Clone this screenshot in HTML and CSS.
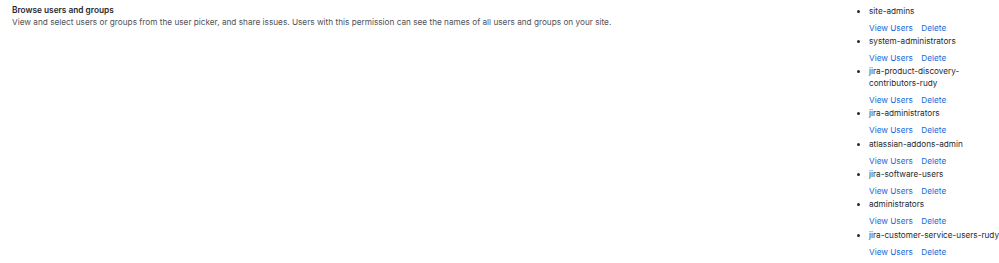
FILE: index.html
```html
<!DOCTYPE html>
<html>
<head>
    <title>Permissions</title>
    <link rel="stylesheet" href="styles.css">
</head>
<body>
    <div class="perm-row">
        <div class="perm-info">
            <div class="perm-title">Browse users and groups</div>
            <div class="perm-desc">View and select users or groups from the user picker, and share issues. Users with this permission can see the names of all users and groups on your site.</div>
        </div>
        <div class="perm-grants">
            <ul class="grant-list">
                <li>
                    <div class="grant-name">site-admins</div>
                    <div class="grant-actions"><a href="#">View Users</a><a href="#">Delete</a></div>
                </li>
                <li>
                    <div class="grant-name">system-administrators</div>
                    <div class="grant-actions"><a href="#">View Users</a><a href="#">Delete</a></div>
                </li>
                <li>
                    <div class="grant-name">jira-product-discovery-contributors-rudy</div>
                    <div class="grant-actions"><a href="#">View Users</a><a href="#">Delete</a></div>
                </li>
                <li>
                    <div class="grant-name">jira-administrators</div>
                    <div class="grant-actions"><a href="#">View Users</a><a href="#">Delete</a></div>
                </li>
                <li>
                    <div class="grant-name">atlassian-addons-admin</div>
                    <div class="grant-actions"><a href="#">View Users</a><a href="#">Delete</a></div>
                </li>
                <li>
                    <div class="grant-name">jira-software-users</div>
                    <div class="grant-actions"><a href="#">View Users</a><a href="#">Delete</a></div>
                </li>
                <li>
                    <div class="grant-name">administrators</div>
                    <div class="grant-actions"><a href="#">View Users</a><a href="#">Delete</a></div>
                </li>
                <li>
                    <div class="grant-name">jira-customer-service-users-rudy</div>
                    <div class="grant-actions"><a href="#">View Users</a><a href="#">Delete</a></div>
                </li>
            </ul>
        </div>
    </div>
</body>
</html>
```

FILE: styles.css
```css
body {
    margin: 0;
    font-family: "Inter", sans-serif;
    font-size: 8.2px;
    color: #292a2e;
    background: #fff;
    overflow: hidden;
}
.perm-row {
    display: flex;
    padding: 4.5px 0 0 12px;
}
.perm-info {
    flex: 1;
}
.perm-title {
    font-size: 8.3px;
    font-weight: 600;
    line-height: 11px;
    color: #292a2e;
}
.perm-desc {
    font-size: 8.22px;
    line-height: 12px;
    color: #505258;
}
.perm-grants {
    width: 142px;
    margin-right: -4px;
    flex: none;
}
.grant-list {
    margin: 0;
    padding: 0 0 0 8px;
}
.grant-list li {
    line-height: 12px;
    padding-bottom: 1.3px;
}
.grant-actions {
    margin-top: 5px;
    display: flex;
    gap: 8.5px;
}
.grant-actions a {
    color: #1868db;
    text-decoration: none;
}
```
